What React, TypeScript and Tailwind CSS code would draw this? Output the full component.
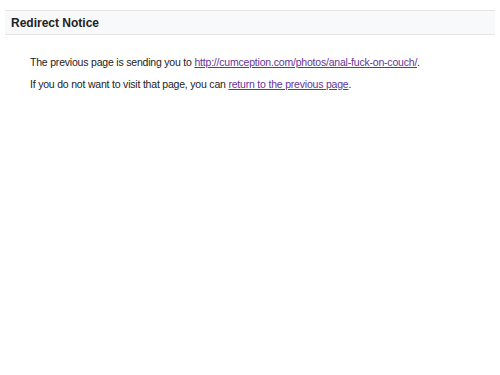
import React from "react";

export default function App() {
  return (
    <div className="min-h-[375px] bg-white font-['Liberation_Sans',Arial,sans-serif] text-black">
      <div className="pt-[10px] px-[5px]">
        {/* Barre titre */}
        <div className="h-[25px] flex items-center px-[6px] bg-[#f8f9fa] border-t border-b border-[#e5e5e5]">
          <h1 className="text-[12px] font-bold leading-none text-[#222]">Redirect Notice</h1>
        </div>
      </div>

      {/* Contenu */}
      <div className="pl-[30px] pt-[21px] text-[10.5px] tracking-[-0.2px] leading-[13px] text-[#222]">
        <p>
          The previous page is sending you to{" "}
          <a href="#" className="text-[#663399] underline">
            http://cumception.com/photos/anal-fuck-on-couch/
          </a>
          .
        </p>
        <p className="mt-[9px]">
          If you do not want to visit that page, you can{" "}
          <a href="#" className="text-[#663399] underline">
            return to the previous page
          </a>
          .
        </p>
      </div>
    </div>
  );
}
